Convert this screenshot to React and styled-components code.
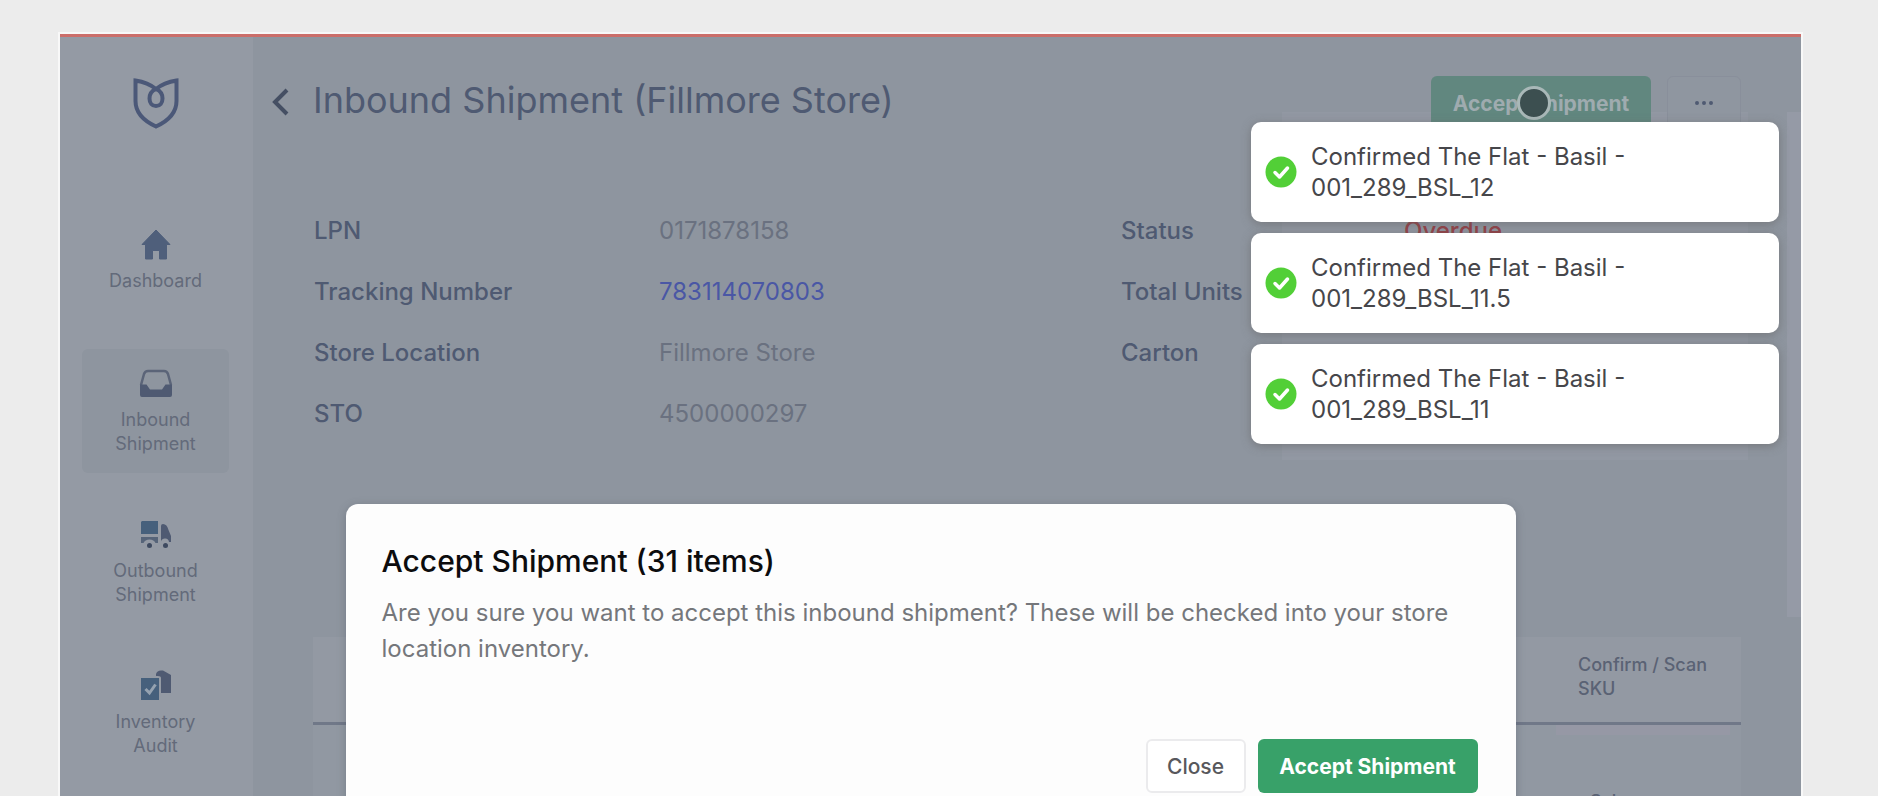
import React from 'react';
import styled, { createGlobalStyle, css } from 'styled-components';
import { Ellipsis } from 'lucide-react';

const Global = createGlobalStyle`
  *, *::before, *::after { box-sizing: border-box; }
  html, body, #root { height: 100%; }
  body {
    margin: 0;
    background: #ececec;
    font-family: Inter, "Liberation Sans", sans-serif;
    overflow: hidden;
  }
  button { font-family: inherit; cursor: pointer; }
  h1, h2, p, dl, dd, dt, ul { margin: 0; padding: 0; }
`;

const Page = styled.div`
  height: 100vh;
  padding: 34px 77px 0 60px;
  overflow: hidden;
`;

const Window = styled.div`
  position: relative;
  display: flex;
  height: 100%;
  border-top: 3px solid #cb6e6a;
  background: #8e959f;
  box-shadow: 0 0 0 2px #f8f8f8;
`;

const Sidebar = styled.nav`
  flex: none;
  width: 193px;
  padding: 38px 24px 0 22px;
  background: #949aa4;
  overflow: hidden;
`;

const Logo = styled.svg`
  display: block;
  width: 52px;
  height: 56px;
  margin: 0 auto 67px;
`;

const NavList = styled.ul`
  display: flex;
  flex-direction: column;
  gap: 27px;
  list-style: none;
`;

const NavLink = styled.a`
  display: flex;
  flex-direction: column;
  align-items: center;
  justify-content: center;
  gap: 9px;
  height: 124px;
  border-radius: 6px;
  background: ${({ $active }) => ($active ? '#8e959f' : 'transparent')};
  color: #636a7a;
  font-size: 18px;
  line-height: 24px;
  text-align: center;
  text-decoration: none;

  svg { width: 34px; height: 32px; flex: none; }
`;

const NavText = styled.span`
  width: 100px;
`;

const Content = styled.main`
  position: relative;
  flex: 1;
  min-width: 0;
  padding: 39px 60px 0 18px;
  overflow: hidden;
`;

const Header = styled.header`
  display: flex;
  align-items: flex-start;
  gap: 16px;
`;

const BackButton = styled.button`
  display: flex;
  width: 18px;
  height: 52px;
  padding: 0;
  border: 0;
  background: none;
  align-items: center;

  svg { width: 18px; height: 28px; }
`;

const Title = styled.h1`
  flex: 1;
  padding-left: 8px;
  color: #4f5a72;
  font-size: 36px;
  font-weight: 400;
  line-height: 48px;
`;

const Button = styled.button`
  height: 54px;
  padding: 0 20px;
  border: 1px solid transparent;
  border-radius: 6px;
  font-size: 21px;
  white-space: nowrap;
  ${({ $kind }) => ({
    dimmed: css`
      width: 220px;
      background: #61877f;
      color: #9fabaf;
      font-weight: 700;
    `,
    more: css`
      display: grid;
      place-items: center;
      width: 74px;
      padding: 0;
      border-color: #898f9b;
      background: #8f96a0;
      color: #4f5a72;
    `,
    primary: css`
      width: 220px;
      background: #38a169;
      color: #fff;
      font-weight: 700;
    `,
    plain: css`
      width: 100px;
      padding: 0;
      border: 2px solid #ebebed;
      background: #fff;
      color: #58585c;
      font-weight: 500;
    `,
  })[$kind]}
`;

const Details = styled.section`
  display: grid;
  grid-template-columns: 807px 1fr;
  padding: 70px 0 0 43px;
`;

const Facts = styled.dl`
  display: grid;
  grid-template-columns: ${({ $label }) => $label}px 1fr;
  grid-auto-rows: 61px;
  align-content: start;
  align-items: center;
  font-size: 24px;

  dt { color: #4f5a72; font-weight: 500; }
  dd { color: #6a7180; }
  a { color: #4a57a5; text-decoration: none; }
`;

const Status = styled.span`
  color: #953f45;
  font-weight: 500;
`;

const Panel = styled.div`
  position: absolute;
  top: 75px;
  right: 53px;
  width: 466px;
  height: 348px;
  background: #9298a3;
`;

const ItemTable = styled.table`
  width: calc(100% - 42px);
  margin: 193px 0 0 42px;
  border-collapse: collapse;
  background: #9198a2;

  th {
    height: 86px;
    padding: 0 0 4px 22px;
    border-bottom: 3px solid #707888;
    background: #9399a3;
    color: #5a6274;
    font-size: 18px;
    font-weight: 500;
    line-height: 24px;
    text-align: left;
  }
  td {
    height: 120px;
    padding: 0 11px 0 0;
    color: #5a6274;
    font-size: 18px;
    font-weight: 500;
    line-height: 24px;
    vertical-align: top;
  }
`;

const LastColumn = styled.col`
  width: 185px;
`;

const RowStrip = styled.div`
  height: 10px;
  margin-bottom: 55px;
  background: #9698a5;
`;

const SaleTag = styled.div`
  padding-left: 34px;
`;

const Scrollbar = styled.div`
  position: absolute;
  top: 75px;
  right: 0;
  width: 14px;
  height: 505px;
  background: #959aa6;
`;

const Cursor = styled.span`
  position: absolute;
  top: 49px;
  right: 250px;
  width: 34px;
  height: 34px;
  border: 3px solid #a9b8b8;
  border-radius: 50%;
  background: #3c4f50;
`;

const Toasts = styled.div`
  position: absolute;
  top: 85px;
  right: 22px;
  display: flex;
  flex-direction: column;
  gap: 11px;
  width: 528px;
`;

const Toast = styled.div`
  display: flex;
  align-items: center;
  gap: 14px;
  height: 100px;
  padding: 0 14px;
  border-radius: 10px;
  background: #fff;
  box-shadow: 0 2px 10px rgba(100, 100, 100, 0.6);
  color: #46464a;
  font-size: 24px;
  line-height: 31px;

  svg { flex: none; width: 32px; height: 32px; }
  p { width: 340px; }
`;

const Modal = styled.section`
  position: absolute;
  top: 467px;
  left: 50%;
  width: 1170px;
  min-height: 420px;
  margin-left: -585px;
  padding: 35px 38px 36px 36px;
  border-radius: 12px;
  background: #fdfdfd;
  box-shadow: 0 2px 8px rgba(70, 75, 90, 0.35);
`;

const ModalTitle = styled.h2`
  color: #0c0c0e;
  font-size: 30px;
  font-weight: 500;
  line-height: 44px;
`;

const ModalText = styled.p`
  margin-top: 12px;
  color: #75777b;
  font-size: 24px;
  line-height: 36px;
`;

const ModalActions = styled.div`
  display: flex;
  justify-content: flex-end;
  gap: 12px;
  margin-top: 72px;
`;

const HomeIcon = () => (
  <svg viewBox="0 0 34 32" fill="#4f5f7b" aria-hidden="true">
    <path d="M17 2 31 16.500h-3.500V31H20.500V22.500h-7V31H6.500V16.500H3z" strokeLinejoin="round" stroke="#4f5f7b" />
  </svg>
);

const InboxIcon = () => (
  <svg viewBox="0 0 34 32" fill="none" aria-hidden="true">
    <path d="M2 18 5 7Q6 4 9 4H25Q28 4 29 7L32 18" stroke="#5b6478" strokeWidth="2.500" />
    <path d="M1 17.500H7.500L11 22.500H23L26.500 17.500H33V28Q33 30 31 30H3Q1 30 1 28Z" fill="#4f5a72" />
  </svg>
);

const TruckIcon = () => (
  <svg viewBox="0 0 34 32" aria-hidden="true">
    <path d="M3 3H19V16H2V4Z" fill="#46607c" />
    <path d="M2 19H19V25H16.500Q15 21.500 10.500 21.500T4.500 25H2Z" fill="#566479" />
    <path d="M22 25V8Q22 6 24 6 28 6 29.500 12L32 18V24H30A4 4 0 0 0 22 25Z" fill="#4f5a72" />
    <circle cx="10.500" cy="27.500" r="2.500" fill="#3e4a60" />
    <circle cx="26.500" cy="27.500" r="2.500" fill="#3e4a60" />
  </svg>
);

const AuditIcon = () => (
  <svg viewBox="0 0 34 32" fill="none" aria-hidden="true">
    <path d="M17 7V5Q18 1.500 22 1.500H24L32 6V24H22V9Q22 7 19 7Z" fill="#4f5a72" />
    <path d="M2 9H20V31H2Z" fill="#46607c" />
    <path d="m6.500 20 4 4 6-8.500" stroke="#95a2b0" strokeWidth="3" />
  </svg>
);

const CheckIcon = () => (
  <svg viewBox="0 0 32 32" fill="none" aria-hidden="true">
    <circle cx="16" cy="16" r="15.500" fill="#52cf37" />
    <path d="m10 16.500 4.500 4.500 8-9" stroke="#fff" strokeWidth="3.500" strokeLinecap="round" strokeLinejoin="round" />
  </svg>
);

const nav = [
  { label: 'Dashboard', Icon: HomeIcon },
  { label: 'Inbound Shipment', Icon: InboxIcon, active: true },
  { label: 'Outbound Shipment', Icon: TruckIcon },
  { label: 'Inventory Audit', Icon: AuditIcon },
];

const toasts = ['001_289_BSL_12', '001_289_BSL_11.5', '001_289_BSL_11'];

export default function App() {
  return (
    <Page>
      <Global />
      <Window>
        <Sidebar>
          <Logo viewBox="0 0 52 56" fill="none" stroke="#4b5878" strokeWidth="4" role="img" aria-label="Home">
            <path d="M26 14Q18 7.500 5.500 5.500V26C5.500 38 14 46 26 51.500 38 46 46.500 38 46.500 26V5.500Q34 7.500 26 14Z" />
            <path d="M26 14C21 16 19.500 19 19.500 23.500 19.500 28 22 31 26 31S32.500 28 32.500 23.500C32.500 19 31 16 26 14Z" />
          </Logo>
          <NavList>
            {nav.map(({ label, Icon, active }) => (
              <li key={label}>
                <NavLink href="#" $active={active}>
                  <Icon />
                  <NavText>{label}</NavText>
                </NavLink>
              </li>
            ))}
          </NavList>
        </Sidebar>

        <Panel />

        <Content>
          <Header>
            <BackButton aria-label="Back">
              <svg viewBox="0 0 18 28" fill="none" stroke="#454f63" strokeWidth="4">
                <path d="M16 2 4 14 16 26" />
              </svg>
            </BackButton>
            <Title>Inbound Shipment (Fillmore Store)</Title>
            <Button $kind="dimmed">Accept Shipment</Button>
            <Button $kind="more" aria-label="More"><Ellipsis size={24} /></Button>
          </Header>

          <Details>
            <Facts $label={345}>
              <dt>LPN</dt><dd>0171878158</dd>
              <dt>Tracking Number</dt><dd><a href="#">783114070803</a></dd>
              <dt>Store Location</dt><dd>Fillmore Store</dd>
              <dt>STO</dt><dd>4500000297</dd>
            </Facts>
            <Facts $label={283}>
              <dt>Status</dt><dd><Status>Overdue</Status></dd>
              <dt>Total Units</dt><dd />
              <dt>Carton</dt><dd />
            </Facts>
          </Details>

          <ItemTable>
            <colgroup><col /><LastColumn /></colgroup>
            <thead>
              <tr><th /><th scope="col">Confirm / Scan<br />SKU</th></tr>
            </thead>
            <tbody>
              <tr>
                <td />
                <td>
                  <RowStrip />
                  <SaleTag>Sale</SaleTag>
                </td>
              </tr>
            </tbody>
          </ItemTable>
        </Content>

        <Scrollbar />
        <Cursor />

        <Modal role="dialog" aria-labelledby="accept-title">
          <ModalTitle id="accept-title">Accept Shipment (31 items)</ModalTitle>
          <ModalText>
            Are you sure you want to accept this inbound shipment? These will be checked into your store location inventory.
          </ModalText>
          <ModalActions>
            <Button $kind="plain">Close</Button>
            <Button $kind="primary">Accept Shipment</Button>
          </ModalActions>
        </Modal>

        <Toasts role="status">
          {toasts.map((sku) => (
            <Toast key={sku}>
              <CheckIcon />
              <p>Confirmed The Flat - Basil - {sku}</p>
            </Toast>
          ))}
        </Toasts>
      </Window>
    </Page>
  );
}
